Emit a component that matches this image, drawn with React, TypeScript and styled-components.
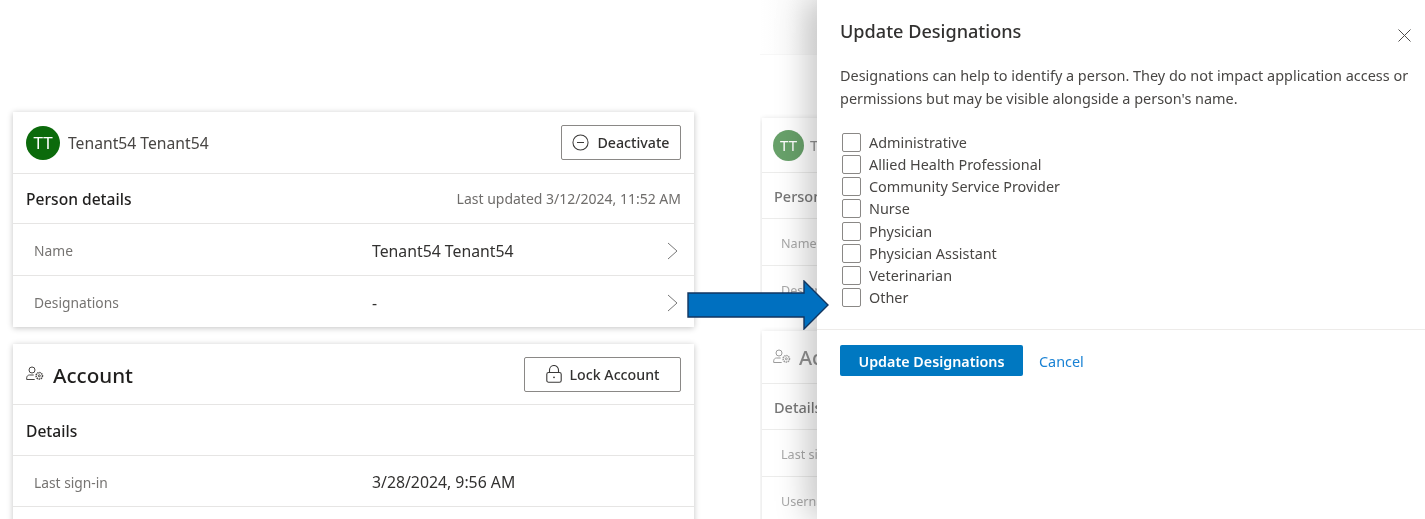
import styled, { createGlobalStyle } from "styled-components";

const designations = [
  "Administrative",
  "Allied Health Professional",
  "Community Service Provider",
  "Nurse",
  "Physician",
  "Physician Assistant",
  "Veterinarian",
  "Other",
];

const Global = createGlobalStyle`
  html, body { margin: 0; padding: 0; background: #fff; }
  body { font-family: "Noto Sans", "Open Sans", sans-serif; color: #323130; }
`;

const MinusIcon = () => (
  <svg width="17" height="17" viewBox="0 0 18 18" fill="none" stroke="#3b3a39" strokeWidth="1.1">
    <circle cx="9" cy="9" r="8" />
    <path d="M5.3 9h7.4" />
  </svg>
);

const LockIcon = () => (
  <svg width="16" height="18" viewBox="0 0 16 18" fill="none" stroke="#3b3a39" strokeWidth="1.1">
    <path d="M3.5 7.5V5a4.5 4.5 0 0 1 9 0v2.5" />
    <rect x="0.8" y="7.5" width="14.4" height="9.7" rx="1.8" />
    <circle cx="8" cy="12.3" r="0.9" fill="#3b3a39" stroke="none" />
  </svg>
);

const PersonGearIcon = ({ color = "#484644" }: { color?: string }) => (
  <svg width="18" height="16" viewBox="0 0 18 16" fill="none" stroke={color} strokeWidth="1">
    <circle cx="6" cy="4" r="3" />
    <path d="M.7 13.5v-1.7c0-1.5 1.2-2.8 2.8-2.8h4.2M.7 13.5h8" />
    <circle cx="13.3" cy="9.8" r="3.2" strokeDasharray="1.4 0.7" strokeWidth="1.5" />
    <circle cx="13.3" cy="9.8" r="1" />
  </svg>
);

const Chevron = () => (
  <svg width="11" height="18" viewBox="0 0 11 18" fill="none" stroke="#777" strokeWidth="1">
    <path d="M1 1l9 8-9 8" />
  </svg>
);

const CloseIcon = () => (
  <svg width="13" height="13" viewBox="0 0 13 13" fill="none" stroke="#4f4d4b" strokeWidth="1">
    <path d="M.5.5l12 12M12.5.5l-12 12" />
  </svg>
);

const App = () => {
  return (
    <Page>
      <Global />
      <LeftPane>
        <Card>
          <CardHead>
            <Identity>
              <Avatar>TT</Avatar>
              <PersonName>Tenant54 Tenant54</PersonName>
            </Identity>
            <OutlineButton>
              <MinusIcon />
              Deactivate
            </OutlineButton>
          </CardHead>
          <SectionRow>
            <SectionTitle>Person details</SectionTitle>
            <Muted>Last updated 3/12/2024, 11:52 AM</Muted>
          </SectionRow>
          <Row $tall>
            <RowLabel>Name</RowLabel>
            <RowValue>Tenant54 Tenant54</RowValue>
            <Chevron />
          </Row>
          <Row>
            <RowLabel>Designations</RowLabel>
            <RowValue>-</RowValue>
            <Chevron />
          </Row>
        </Card>
        <Card>
          <CardHead $account>
            <Identity>
              <PersonGearIcon />
              <AccountTitle>Account</AccountTitle>
            </Identity>
            <OutlineButton $wide>
              <LockIcon />
              Lock Account
            </OutlineButton>
          </CardHead>
          <SectionRow $tall>
            <SectionTitle>Details</SectionTitle>
          </SectionRow>
          <Row>
            <RowLabel>Last sign-in</RowLabel>
            <RowValue>3/28/2024, 9:56 AM</RowValue>
          </Row>
          <Row />
        </Card>
      </LeftPane>

      <Backdrop>
        <BackdropBar />
        <BackdropCards>
          <BackdropCard>
            <BackdropHead>
              <BackdropAvatar>TT</BackdropAvatar>
              <span>Tenant54</span>
            </BackdropHead>
            <BackdropSection>Person details</BackdropSection>
            <BackdropRow>Name</BackdropRow>
            <BackdropRow>Designations</BackdropRow>
          </BackdropCard>
          <BackdropCard>
            <BackdropAccount>
              <PersonGearIcon color="#777" />
              <span>Account</span>
            </BackdropAccount>
            <BackdropSection>Details</BackdropSection>
            <BackdropRow>Last sign-in</BackdropRow>
            <BackdropRow>Username</BackdropRow>
          </BackdropCard>
        </BackdropCards>
      </Backdrop>

      <Panel>
        <PanelBody>
          <PanelTop>
            <PanelTitle>Update Designations</PanelTitle>
            <CloseButton>
              <CloseIcon />
            </CloseButton>
          </PanelTop>
          <Description>
            Designations can help to identify a person. They do not impact application access or
            permissions but may be visible alongside a person's name.
          </Description>
          <CheckList>
            {designations.map((d) => (
              <CheckRow key={d}>
                <CheckBox />
                {d}
              </CheckRow>
            ))}
          </CheckList>
        </PanelBody>
        <PanelFooter>
          <PrimaryButton>Update Designations</PrimaryButton>
          <CancelLink>Cancel</CancelLink>
        </PanelFooter>
      </Panel>

      <Arrow width="143" height="50" viewBox="0 0 143 50">
        <path
          d="M1 13h116V1l24 24-24 24V37H1z"
          fill="#0070c0"
          stroke="#12355f"
          strokeWidth="1.4"
        />
      </Arrow>
    </Page>
  );
};

export default App;

const Page = styled.div`
  position: relative;
  display: flex;
  width: 1425px;
  height: 519px;
  overflow: hidden;
  background: #fff;
  filter: blur(0.4px);
`;

const LeftPane = styled.div`
  width: 760px;
  flex: none;
  box-sizing: border-box;
  padding: 112px 66px 0 13px;
  display: flex;
  flex-direction: column;
  gap: 17px;
`;

const Card = styled.section`
  background: #fff;
  box-shadow: 0 1px 6px rgba(0, 0, 0, 0.24);
`;

const CardHead = styled.div<{ $account?: boolean }>`
  height: ${(p) => (p.$account ? 60 : 61)}px;
  display: flex;
  align-items: center;
  justify-content: space-between;
  padding: 0 13px;
  border-bottom: 1px solid #e6e5e4;
`;

const Identity = styled.div`
  display: flex;
  align-items: center;
  gap: 8px;
`;

const Avatar = styled.div`
  width: 34px;
  height: 34px;
  border-radius: 50%;
  background: #0b6a0b;
  color: #fff;
  font-size: 17px;
  display: flex;
  align-items: center;
  justify-content: center;
`;

const PersonName = styled.div`
  font-size: 15.7px;
  color: #484644;
`;

const AccountTitle = styled.h2`
  margin: 0 0 0 1px;
  padding-top: 2px;
  font-size: 20.6px;
  font-weight: 500;
  color: #201f1e;
`;

const OutlineButton = styled.button<{ $wide?: boolean }>`
  width: ${(p) => (p.$wide ? 157 : 120)}px;
  height: 35px;
  box-sizing: border-box;
  background: #fff;
  border: 1px solid #8a8886;
  border-radius: 2px;
  display: flex;
  align-items: center;
  justify-content: center;
  gap: 8px;
  font: 500 14.2px "Noto Sans", sans-serif;
  color: #323130;
  padding: 0;
`;

const SectionRow = styled.div<{ $tall?: boolean }>`
  height: 49px;
  padding: ${(p) => (p.$tall ? 1 : 0)}px 13px 0;
  display: flex;
  align-items: center;
  justify-content: space-between;
  border-bottom: 1px solid #e6e5e4;
`;

const SectionTitle = styled.div`
  font-size: 15.6px;
  font-weight: 500;
  color: #201f1e;
`;

const Muted = styled.div`
  font-size: 14px;
  color: #6f6d6b;
`;

const Row = styled.div<{ $tall?: boolean }>`
  height: ${(p) => (p.$tall ? 52 : 51)}px;
  box-sizing: border-box;
  display: grid;
  grid-template-columns: 338px 1fr auto;
  align-items: center;
  padding: 2px 16px 0 21px;
  border-bottom: 1px solid #e6e5e4;
  &:last-child {
    border-bottom: 0;
  }
`;

const RowLabel = styled.div`
  font-size: 13.8px;
  color: #767472;
`;

const RowValue = styled.div`
  font-size: 15.8px;
  color: #323130;
`;

const Backdrop = styled.div`
  width: 57px;
  flex: none;
  overflow: hidden;
  white-space: nowrap;
  opacity: 0.72;
`;

const BackdropBar = styled.div`
  height: 54px;
  background: linear-gradient(90deg, #fff, #f6f6f6);
  border-bottom: 1px solid #f4f4f4;
`;

const BackdropCards = styled.div`
  padding: 63px 0 0 2px;
  display: flex;
  flex-direction: column;
  gap: 18px;
`;

const BackdropCard = styled.div`
  width: 400px;
  background: #fff;
  box-shadow: 0 1px 6px rgba(0, 0, 0, 0.2);
`;

const BackdropHead = styled.div`
  height: 55px;
  box-sizing: border-box;
  display: flex;
  align-items: center;
  gap: 6px;
  padding: 0 11px;
  border-bottom: 1px solid #e6e5e4;
  font-size: 15px;
  color: #666;
`;

const BackdropAvatar = styled.div`
  width: 31px;
  height: 31px;
  border-radius: 50%;
  background: #2f7d32;
  color: #fff;
  font-size: 15px;
  display: flex;
  align-items: center;
  justify-content: center;
`;

const BackdropAccount = styled(BackdropHead)`
  height: 53px;
  font-size: 20px;
  font-weight: 500;
  gap: 8px;
`;

const BackdropSection = styled.div`
  height: 46px;
  box-sizing: border-box;
  display: flex;
  align-items: center;
  padding: 1px 12px 0;
  border-bottom: 1px solid #e6e5e4;
  font-size: 14.5px;
  font-weight: 500;
  color: #444;
`;

const BackdropRow = styled.div`
  height: 47px;
  box-sizing: border-box;
  display: flex;
  align-items: center;
  padding: 2px 19px 0;
  border-bottom: 1px solid #e6e5e4;
  font-size: 12.6px;
  color: #888;
`;

const Panel = styled.aside`
  position: relative;
  flex: 1;
  background: #fff;
  box-shadow: -10px 0 30px rgba(0, 0, 0, 0.22);
  display: flex;
  flex-direction: column;
`;

const PanelBody = styled.div`
  height: 330px;
  box-sizing: border-box;
  padding: 17px 14px 0 23px;
  border-bottom: 1px solid #edebe9;
`;

const PanelTop = styled.div`
  display: flex;
  align-items: flex-start;
  justify-content: space-between;
`;

const PanelTitle = styled.h1`
  margin: 0;
  font-size: 18.1px;
  line-height: 28px;
  font-weight: 500;
  color: #323130;
`;

const CloseButton = styled.div`
  margin-top: 12px;
  display: flex;
`;

const Description = styled.p`
  margin: 19px 0 0;
  font-size: 14.45px;
  line-height: 23px;
  color: #484644;
`;

const CheckList = styled.div`
  margin-top: 21.5px;
  margin-left: 2px;
  display: flex;
  flex-direction: column;
`;

const CheckRow = styled.label`
  height: 22.15px;
  display: flex;
  align-items: center;
  gap: 8px;
  font-size: 14.4px;
  color: #484644;
`;

const CheckBox = styled.span`
  width: 19px;
  height: 19px;
  box-sizing: border-box;
  border: 1px solid #8a8886;
  border-radius: 2px;
  background: #fff;
`;

const PanelFooter = styled.div`
  display: flex;
  align-items: center;
  gap: 16px;
  padding: 15px 23px 0;
`;

const PrimaryButton = styled.button`
  width: 183px;
  height: 31px;
  background: #0078c1;
  border: 0;
  border-radius: 2px;
  color: #fff;
  font: 600 14.3px "Noto Sans", sans-serif;
  padding: 2px 0 0;
`;

const CancelLink = styled.a`
  padding-top: 2px;
  font-size: 14.4px;
  color: #1a82d4;
`;

const Arrow = styled.svg`
  position: absolute;
  left: 687px;
  top: 280px;
`;
